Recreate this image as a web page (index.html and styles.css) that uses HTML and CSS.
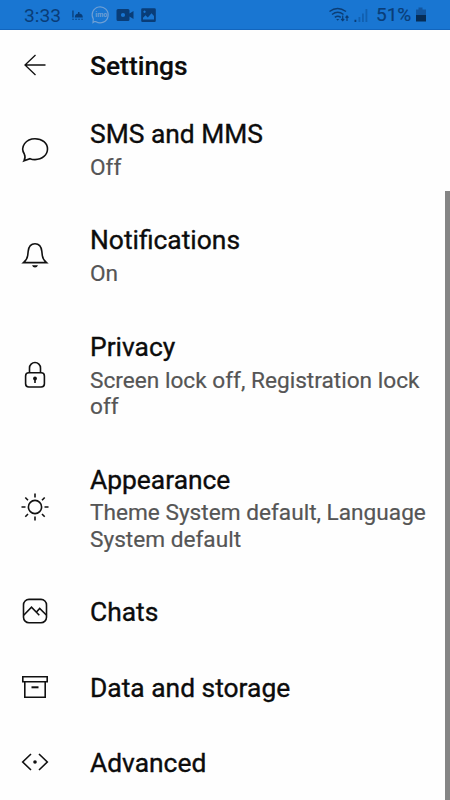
FILE: index.html
```
<!DOCTYPE html>
<html lang="en">
<head>
<meta charset="utf-8">
<title>Settings</title>
<link rel="stylesheet" href="styles.css">
</head>
<body>
<div class="screen">
  <div class="status">
    <span class="time">3:33</span>
    <svg class="status-left" width="90" height="20" viewBox="0 0 90 20">
      <g fill="#093d78">
        <path d="M2.300 5.500h1.300v7H2.300zM4.800 12.500a4 4 0 0 1 8 0zM2.300 13.700h1.500v1H2.300zM5.300 13.700h1.500v1H5.300zM8.300 13.700h1.500v1H8.300zM11.300 13.700h1.500v1h-1.500zM8 7h1.500v2H8z"/>
        <path fill-rule="evenodd" d="M48 4h10a1.500 1.500 0 0 1 1.500 1.500v3l4-2.500v8l-4-2.500V14.500A1.500 1.500 0 0 1 58 16H48a1.500 1.500 0 0 1-1.500-1.500v-9A1.500 1.500 0 0 1 48 4zm5 3.900a2.100 2.100 0 1 0 0 4.200 2.100 2.100 0 0 0 0-4.200z"/>
        <path fill-rule="evenodd" d="M72.500 3.200h12A1.300 1.300 0 0 1 85.800 4.500v11.200a1.300 1.300 0 0 1-1.300 1.300h-12a1.300 1.300 0 0 1-1.300-1.300V4.500a1.300 1.300 0 0 1 1.300-1.300zM73 14.500h11V11l-2.500-2.800-3.700 4.300-2.300-2.300L73 12.800zM74.500 5.500a1.200 1.200 0 1 0 .1 0z"/>
      </g>
      <path d="M24.500 16.500L23 17.500l.3-3.500A8 8 0 1 1 26 16.700z" fill="none" stroke="#6e9fd4" stroke-width="1.200"/>
      <text x="31.300" y="12.300" text-anchor="middle" class="imo">imo</text>
    </svg>
    <svg class="status-right" width="42" height="20" viewBox="0 0 42 20">
      <g fill="none" stroke="#0b3d75" stroke-width="1.500">
        <path d="M-.5 6.500q8-6 16.500 0M2 9.500q5.700-4.300 11.500 0M4.800 12.400q3-2.400 6 0"/>
        <path stroke-width="1.200" d="M12.700 10.500v5M11.200 14l1.500 1.700 1.500-1.700M17 16v-5M15.500 12.700L17 11l1.500 1.700"/>
      </g>
      <path d="M6.200 14h3l-1.500 1.800zM24.500 14.800h1.800V17h-1.800z" fill="#0b3d75"/>
      <path d="M28.500 12h1.800v5h-1.800zM32 8.500h1.800V17H32zM35.500 4h1.800v13h-1.800z" fill="#1160b0"/>
    </svg>
    <span class="percent">51%</span>
    <svg width="12" height="20" viewBox="0 0 12 20">
      <path d="M3.500 2.500h4v2H11v6H1v-6h2.500z" fill="#1256a0"/>
      <path d="M1 10h10v6.500H1z" fill="#062c55"/>
    </svg>
  </div>
  <div class="header">
    <svg class="icon" viewBox="0 0 30 30"><path d="M15.500 5L5 15l10.500 10M5 15h20.500" stroke-width="1.300"/></svg>
    <h1>Settings</h1>
  </div>
  <div class="row">
    <svg class="icon" viewBox="0 0 30 30"><path d="M4.300 20C-.2 12.700 6 4.700 15 4.700c7.300 0 12.500 4.500 12.500 10.300S22.300 25.600 15 25.600c-1.800 0-3.600-.3-5-.9L4 26.800c1.200-2.200 1.400-4.600.3-6.800z"/></svg>
    <div><h2>SMS and MMS</h2><p>Off</p></div>
  </div>
  <div class="row">
    <svg class="icon" viewBox="0 0 30 30"><path d="M3.500 22.600c2.500-2.100 3.800-4 4.200-7.100l.5-4.300C8.700 6.500 11 3.700 15 3.700s6.300 2.800 6.800 7.500l.5 4.300c.4 3.100 1.700 5 4.200 7.100z"/><path d="M12 25.200h6q-.8 2.300-3 2.300t-3-2.300z" class="solid"/></svg>
    <div><h2>Notifications</h2><p>On</p></div>
  </div>
  <div class="row">
    <svg class="icon" viewBox="0 0 30 30"><rect x="5.600" y="12.700" width="18.800" height="14.300" rx="3.200"/><path d="M9.500 12.500V8a5.500 5.500 0 0 1 11 0v4.500M15 19v4"/><circle cx="15" cy="18.500" r="1.900" class="solid"/></svg>
    <div><h2>Privacy</h2><p>Screen lock off, Registration lock off</p></div>
  </div>
  <div class="row">
    <svg class="icon" viewBox="0 0 30 30"><circle cx="15" cy="15" r="6.600"/><path stroke-width="1.600" d="M15 1.500v4M15 24.500v4M1.500 15h4M24.500 15h4M5.300 5.500L8 8.200M22 22l2.700 2.700M5.300 24.700L8 22M22 8.200l2.700-2.700"/></svg>
    <div><h2>Appearance</h2><p>Theme System default, Language System default</p></div>
  </div>
  <div class="row">
    <svg class="icon" viewBox="0 0 30 30"><rect x="3.500" y="3.400" width="23" height="23.300" rx="5.500"/><path d="M3.700 19.200l7.800-8 7.800 8M16.500 16l3.200-3.600 6.600 6.600"/></svg>
    <div><h2>Chats</h2></div>
  </div>
  <div class="row">
    <svg class="icon" viewBox="0 0 30 30"><path d="M2.800 4.800h24.400v5H2.800zM4.800 9.800h20.400v15.400H4.800z"/><path d="M11.500 15.300h7" stroke-width="2"/></svg>
    <div><h2>Data and storage</h2></div>
  </div>
  <div class="row">
    <svg class="icon" viewBox="0 0 30 30"><path d="M11 7L2.700 15 11 23M19 7l8.300 8-8.300 8"/><circle cx="15" cy="15" r="1.800" class="solid"/></svg>
    <div><h2>Advanced</h2></div>
  </div>
  <div class="scrollbar"></div>
</div>
</body>
</html>
```
FILE: styles.css
```
* { box-sizing: border-box; }
body { margin: 0; background: #fefefe; font-family: Roboto, sans-serif; color: #0c0c0c; }
.screen { position: relative; width: 450px; height: 800px; overflow: hidden; }
.status {
  display: flex; align-items: center; height: 30px; padding: 0 23px 0 24px;
  background: #1976d2; border-bottom: 1px solid #1265bd; color: #093d78;
  font-size: 20px; line-height: 30px;
}
.status svg { flex: none; }
.time { width: 46px; padding-top: 2px; font-size: 19.2px; }
.status-right { margin-left: auto; overflow: visible; }
.percent { width: 36px; margin: 0 3px 0 4px; padding-top: 1px; font-size: 19px; -webkit-text-stroke: .2px; }
.imo { font-size: 7px; font-weight: 700; fill: #6e9fd4; }
.header { display: flex; align-items: center; height: 67px; padding: 5px 20px 0; }
.header .icon { margin-top: -2px; }
.row { display: flex; align-items: center; padding: 22.1px 20px; }
.icon {
  flex: none; width: 30px; height: 30px; margin: -3px 40px 0 0;
  fill: none; stroke: #111; stroke-width: 1.6;
}
h1, h2 { margin: 0; font-size: 26.4px; line-height: 31px; }
h1 { font-weight: 500; padding-top: 1px; -webkit-text-stroke: .2px; }
h2 { font-weight: 400; -webkit-text-stroke: .35px; }
p { width: 340px; margin: 4.8px 0 0; color: #555; font-size: 22.65px; line-height: 26.4px; -webkit-text-stroke: .2px; }
.solid { fill: #111; stroke: none; }
.scrollbar { position: absolute; top: 191px; right: 0; width: 5px; height: 609px; background: #858585; }
```
